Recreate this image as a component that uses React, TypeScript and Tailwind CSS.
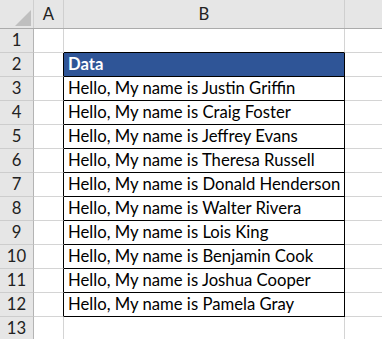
const names = [
  "Justin Griffin",
  "Craig Foster",
  "Jeffrey Evans",
  "Theresa Russell",
  "Donald Henderson",
  "Walter Rivera",
  "Lois King",
  "Benjamin Cook",
  "Joshua Cooper",
  "Pamela Gray",
];

function RowHead({ n, last }: { n: number; last?: boolean }) {
  return (
    <div
      className={
        "w-[34px] shrink-0 bg-[#e6e6e6] border-r border-[#b4b4b4] flex items-center justify-center text-[#222]" +
        (last ? "" : " border-b border-b-[#cdcdcd]")
      }
    >
      {n}
    </div>
  );
}

export default function App() {
  return (
    <div
      className="w-[382px] h-[339px] overflow-hidden bg-white text-[16.7px] leading-none text-black"
      style={{ fontFamily: "Lato, 'Noto Sans', sans-serif" }}
    >
      {/* column headers */}
      <div className="flex h-[29px] bg-[#e6e6e6] border-b border-[#ababab]">
        <div className="w-[34px] shrink-0 border-r border-[#cfcfcf] relative">
          <svg className="absolute left-0 top-0" width="34" height="28">
            <polygon points="31,10 31,26 15,26" fill="#bfbfbf" />
          </svg>
        </div>
        <div className="w-[30px] shrink-0 border-r border-[#cfcfcf] flex items-center justify-center text-[#222]">
          A
        </div>
        <div className="w-[281px] shrink-0 border-r border-[#cfcfcf] flex items-center justify-center text-[#222]">
          B
        </div>
        <div className="flex-1" />
      </div>

      {/* row 1 */}
      <div className="flex h-[24px]">
        <RowHead n={1} />
        <div className="w-[30px] shrink-0 border-r border-b border-[#d4d4d4]" />
        <div className="w-[281px] shrink-0 border-r border-r-[#d4d4d4] border-b border-b-black" />
        <div className="flex-1 border-b border-[#d4d4d4]" />
      </div>

      {/* row 2 header */}
      <div className="flex h-[24px]">
        <RowHead n={2} />
        <div className="w-[30px] shrink-0 border-r border-r-black border-b border-b-[#d4d4d4]" />
        <div className="w-[281px] shrink-0 border-r border-b border-black bg-[#2f5597] text-white font-bold flex items-center pl-[4px]">
          Data
        </div>
        <div className="flex-1 border-b border-[#d4d4d4]" />
      </div>

      {names.map((name, i) => (
        <div className="flex h-[24px]" key={i}>
          <RowHead n={i + 3} />
          <div className="w-[30px] shrink-0 border-r border-r-black border-b border-b-[#d4d4d4]" />
          <div className="w-[281px] shrink-0 border-r border-b border-black flex items-center pl-[4px] whitespace-nowrap">
            Hello, My name is {name}
          </div>
          <div className="flex-1 border-b border-[#d4d4d4]" />
        </div>
      ))}

      {/* row 13 */}
      <div className="flex h-[22px]">
        <RowHead n={13} last />
        <div className="w-[30px] shrink-0 border-r border-[#d4d4d4]" />
        <div className="w-[281px] shrink-0 border-r border-[#d4d4d4]" />
        <div className="flex-1" />
      </div>
    </div>
  );
}
